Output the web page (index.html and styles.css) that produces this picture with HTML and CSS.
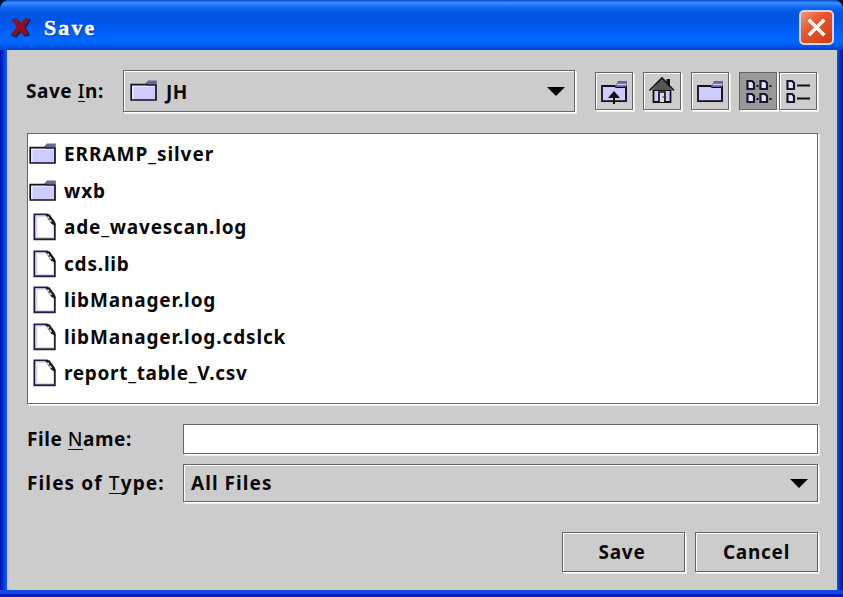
FILE: index.html
```
<!DOCTYPE html>
<html lang="en">
<head>
<meta charset="utf-8">
<title>Save</title>
<link rel="stylesheet" href="styles.css">
</head>
<body>
<svg class="defs" width="0" height="0" aria-hidden="true">
  <symbol id="folder" viewBox="0 0 28 24">
    <path d="M1.5 5.5H16L17.5 6.5H26V21H1.5Z" fill="#ccccff"/>
    <path d="M2.8 20V7H25" fill="none" stroke="#fff" stroke-width="1.2"/>
    <path d="M15 5L18 1.5H26.8V5.5H15Z" fill="#666699"/>
    <path d="M1.2 21V5.6H16L17.2 6H26V21Z" fill="none" stroke="#111122" stroke-width="1.7"/>
  </symbol>
  <symbol id="file" viewBox="0 0 24 28">
    <path d="M2 1.5H14L22 10V26.5H2Z" fill="#fff"/>
    <path d="M3.8 25V3.2H13M4 24.7H20" fill="none" stroke="#ccccff"/>
    <path d="M1.4 1.4H14L21.8 11V26.2H1.4Z" fill="none" stroke="#20203f" stroke-width="1.9"/>
    <path d="M12 1.2H16.5L22.2 9V13L18 10.5Z" fill="#181820"/>
    <path d="M14.5 3.5L16 5.5M16.5 6.5L18.5 9" stroke="#ddd" stroke-width="1.5"/>
  </symbol>
  <symbol id="tool-folder" viewBox="0 0 36 36">
    <path d="M6 13H19L20 14H30V28.2H6Z" fill="#ccccff" stroke="#111" stroke-width="1.8"/>
    <path d="M19 14L22 8H31V14H19Z" fill="#666699"/>
    <path d="M21 11.5H30" stroke="#ccccff" stroke-width="1.4"/>
    <path d="M30.3 13V28" stroke="#111" stroke-width="1.4"/>
  </symbol>
</svg>
<div class="window">
  <header class="titlebar">
    <svg class="app-icon" viewBox="0 0 20 22"><path d="M3 3L8 5L11 8L15 2L19 3L14 11L18 18L14 19L10 14L5 20L1 18L7 11Z" fill="#16244e" stroke="#16244e" stroke-width="1.5"/><path d="M2 3L6 2L10 7L14 2L18 2L13 10L16 17L13 18L9 13L4 19L1 17L6 10Z" fill="#980c18" stroke="#980c18" stroke-width=".6"/></svg>
    <h1 class="title">Save</h1>
    <button class="close" aria-label="Close"><svg viewBox="0 0 32 32"><path d="M8 8L24 24M24 8L8 24" stroke="#fff" stroke-width="3.6"/></svg></button>
  </header>
  <main class="panel">
    <div class="top">
      <span class="label save-in">Save <u>I</u>n:</span>
      <div class="combo box location"><svg class="folder"><use href="#folder"/></svg><span class="jh">JH</span><i class="arrow"></i></div>
      <div class="tools">
        <button class="tool box" aria-label="Up one level"><svg viewBox="0 0 36 36"><use href="#tool-folder"/><path d="M12 25L18 18L24 25Z" fill="#111"/><path d="M18 24V31" stroke="#111" stroke-width="2"/></svg></button>
        <button class="tool box" aria-label="Home"><svg viewBox="0 0 36 36"><path d="M9.5 17H26.5V29H9.5Z" fill="#ccccff" stroke="#111" stroke-width="1.8"/><path d="M22.5 6H26V14H22.5Z" fill="#111"/><path d="M18 5L28 17H8Z" fill="#555"/><path d="M5.5 17.5L18 5L30 17.5" fill="none" stroke="#111" stroke-width="1.6"/><path d="M15 29V19H21V29" fill="#ddd" stroke="#111" stroke-width="1.7"/><path d="M18.5 24H20" stroke="#111"/></svg></button>
        <button class="tool box" aria-label="New folder"><svg><use href="#tool-folder"/></svg></button>
        <div class="views">
          <button class="tool box selected" aria-label="List view"><svg viewBox="0 0 36 36"><g fill="#e4e4ff" stroke="#17172e" stroke-width="2.2"><path d="M7.5 8H12L14 10V16H7.5Z"/><path d="M20.5 8H25L27 10V16H20.5Z"/><path d="M7.5 21H12L14 23V29H7.5Z"/><path d="M20.5 21H25L27 23V29H20.5Z"/></g><path d="M16.5 13h2M29.5 13h2M16.5 26h2M29.5 26h2" stroke="#111" stroke-width="1.8"/></svg></button>
          <button class="tool box" aria-label="Details view"><svg viewBox="0 0 36 36"><g fill="#e4e4ff" stroke="#17172e" stroke-width="2.2"><path d="M7.5 8H12L14 10V16H7.5Z"/><path d="M7.5 21H12L14 23V29H7.5Z"/></g><path d="M17 12.5H30M17 25.5H30" stroke="#111" stroke-width="1.8"/></svg></button>
        </div>
      </div>
    </div>
    <ul class="files box">
      <li><svg class="folder"><use href="#folder"/></svg><span class="f1">ERRAMP_silver</span></li>
      <li><svg class="folder"><use href="#folder"/></svg><span class="f2">wxb</span></li>
      <li><svg class="file"><use href="#file"/></svg><span class="f3">ade_wavescan.log</span></li>
      <li><svg class="file"><use href="#file"/></svg><span class="f4">cds.lib</span></li>
      <li><svg class="file"><use href="#file"/></svg><span class="f5">libManager.log</span></li>
      <li><svg class="file"><use href="#file"/></svg><span class="f6">libManager.log.cdslck</span></li>
      <li><svg class="file"><use href="#file"/></svg><span class="f7">report_table_V.csv</span></li>
    </ul>
    <div class="row name-row"><label class="label name" for="name">File <u>N</u>ame:</label><input id="name" class="box" type="text"></div>
    <div class="row type-row"><span class="label type">Files of <u>T</u>ype:</span><div class="combo box"><span class="all">All Files</span><i class="arrow"></i></div></div>
    <div class="actions"><button class="box"><span class="save">Save</span></button><button class="box"><span class="cancel">Cancel</span></button></div>
  </main>
</div>
</body>
</html>
```
FILE: styles.css
```
* { box-sizing: border-box; }
body { margin: 0; background: #081030; font: 700 19px/24px "Noto Sans", "Open Sans", sans-serif; color: #080808; overflow: hidden; }
button, input { margin: 0; padding: 0; font: inherit; color: inherit; border-radius: 0; outline: 0; }
.defs { display: block; position: absolute; }
svg { display: block; flex: none; }
span { white-space: nowrap; }
.window {
  width: 843px; height: 597px; padding: 0 6px 7px 7px; display: flex; flex-direction: column;
  border-radius: 9px 9px 0 0;
  background: linear-gradient(90deg, #0010a8 0, #0030d8 3px, #0a58f0 6px, #0a58f0 837px, #0038e0 839px, #0010a0 843px);
  box-shadow: inset 0 -3px 0 #0018b8, inset 0 -7px 0 #0848e8;
}
.titlebar {
  height: 50px; margin: 0 -6px 0 -7px; padding: 4px 9px 0 11px; flex: none; display: flex; align-items: center;
  border-radius: 9px 9px 0 0;
  background: linear-gradient(#0848c8 0, #3c94ff 3px, #1c70f4 6px, #0458e4 11px, #0054e4 21px, #0060fa 32px, #0068ff 42px, #0058ec 46px, #0040c8 50px);
}
.app-icon { width: 20px; height: 22px; margin-top: 2px; }
.title { margin: 1px auto 0 13px; font: 700 22px/26px "Liberation Serif", serif; letter-spacing: 2.1px; color: #fff; -webkit-text-stroke: .4px #fff; text-shadow: 1px 1px 1px #0a2888; }
.close { width: 35px; height: 35px; border: 2px solid #d8d4f4; border-radius: 5px; background: linear-gradient(135deg, #f09878, #e45830 40%, #d03c10); }
.close svg { width: 31px; height: 31px; }
.panel { flex: 1; padding: 20px 19px 0 19px; background: #ccc; border: 1px solid #d4ccb4; border-width: 0 1px 2px 1px; display: flex; flex-direction: column; }
.box { border: 1px solid #666; background-color: #ccc; box-shadow: inset 1px 1px 0 #fff, 1px 1px 0 #fff, 2px 2px 0 #eee; }
.top { height: 43px; display: flex; align-items: flex-start; }
.label { flex: none; }
u { text-decoration: none; font-weight: 500; box-shadow: 0 -1px 0 #111 inset; display: inline-block; line-height: 22px; }
.save-in { width: 97px; margin: 9px 0 0 -1px; letter-spacing: .55px; }
.combo { display: flex; align-items: center; height: 42px; flex: 1; padding-right: 9px; }
.combo .arrow { margin-left: auto; border: 9px solid transparent; border-top-color: #000; border-bottom: 0; }
.location { flex: 0 0 452px; padding-left: 6px; }
.folder { width: 28px; height: 24px; }
.file { width: 24px; height: 28px; margin: 0 0 0 4px; }
.jh { margin: 2px 0 0 8px; letter-spacing: .5px; }
.tools { margin: 2px 0 0 20px; display: flex; gap: 10px; }
.tool { width: 38px; height: 38px; }
.tool svg { width: 36px; height: 36px; }
.views { display: flex; gap: 2px; }
.selected { background-color: #999; box-shadow: 1px 1px 0 #fff, 2px 2px 0 #eee; }
.files { list-style: none; margin: 20px 0 0; padding: 2px 0 0 2px; height: 271px; background: #fff; flex: none; width: 791px; }
.files li { display: flex; align-items: center; height: 36.5px; }
.files li svg { position: relative; left: -1px; }
.files li span { margin-left: 6px; }
.f1 { letter-spacing: .95px; }
.f2 { letter-spacing: .9px; }
.f3 { letter-spacing: .8px; }
.f4 { letter-spacing: .8px; }
.f5 { letter-spacing: .87px; }
.f6 { letter-spacing: .87px; }
.f7 { letter-spacing: .68px; }
.row { display: flex; align-items: center; width: 791px; }
.row .label { width: 156px; }
.name { letter-spacing: .55px; }
.type { letter-spacing: 1.12px; }
.all { letter-spacing: 1.05px; }
.save { letter-spacing: .8px; margin-right: 3px; }
.cancel { letter-spacing: .75px; }
.name-row { margin-top: 20px; }
.name-row input { flex: 1; width: 0; height: 30px; background: #fff; padding: 0 4px; }
.type-row { margin-top: 10px; }
.type-row .combo { height: 38px; padding-left: 7px; }
.actions { margin-top: 30px; width: 791px; display: flex; justify-content: flex-end; gap: 10px; }
.actions button { width: 123px; height: 40px; }
```
